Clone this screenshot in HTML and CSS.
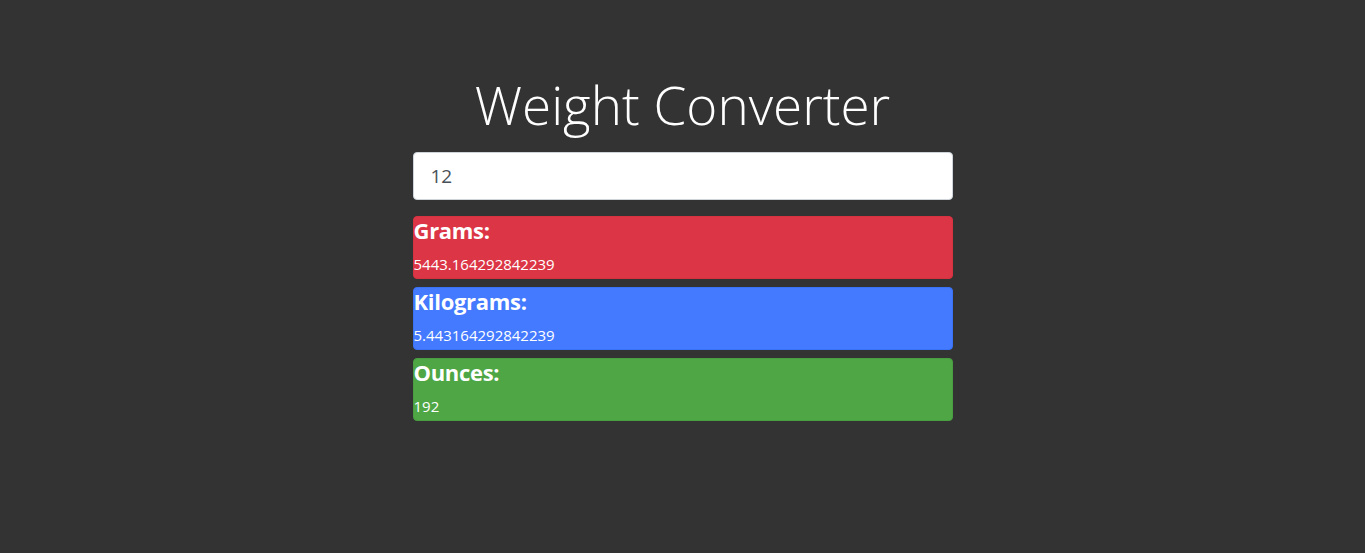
FILE: index.html
```html
<!DOCTYPE html>
<html lang="en">
<head>
<meta charset="utf-8">
<title>Weight Converter</title>
<link rel="stylesheet" href="styles.css">
</head>
<body>
<main class="wrap">
  <h1 class="title">Weight Converter</h1>
  <input class="field" type="text" value="12">
  <div class="card card-red">
    <h4 class="card-title">Grams:</h4>
    <div class="card-value">5443.164292842239</div>
  </div>
  <div class="card card-blue">
    <h4 class="card-title">Kilograms:</h4>
    <div class="card-value">5.443164292842239</div>
  </div>
  <div class="card card-green">
    <h4 class="card-title">Ounces:</h4>
    <div class="card-value">192</div>
  </div>
</main>
</body>
</html>
```
FILE: styles.css
```css
html, body {
  margin: 0;
  padding: 0;
}
body {
  background: #333333;
  color: #ffffff;
  font-family: "Open Sans", "Noto Sans", sans-serif;
  font-size: 16px;
  line-height: 1.5;
}
.wrap {
  width: 540px;
  margin: 0 auto;
  padding-top: 73px;
  display: flex;
  flex-direction: column;
}
.title {
  margin: 0 0 8px 0;
  font-weight: 300;
  font-size: 53px;
  line-height: 1.2;
  text-align: center;
  height: 71px;
}
.field {
  box-sizing: border-box;
  height: 48px;
  width: 100%;
  margin: 0 0 16px 0;
  padding: 8px 17px;
  border: 1px solid #ced4da;
  border-radius: 4px;
  background: #fff;
  color: #495057;
  font-family: inherit;
  font-size: 19px;
  outline: none;
}
.card {
  box-sizing: border-box;
  height: 63px;
  border-radius: 4px;
  border: 1px solid transparent;
  margin-bottom: 8px;
  display: flex;
  flex-direction: column;
}
.card-title {
  margin: 0 0 11px 0;
  font-size: 22px;
  font-weight: 700;
  line-height: 1.2;
  letter-spacing: -0.3px;
}
.card-value {
  font-size: 15px;
  line-height: 20px;
  letter-spacing: 0;
}
.card-red { background: #dc3545; border-color: #d6323f; }
.card-blue { background: #437aff; border-color: #3a72f5; }
.card-green { background: #4ea645; border-color: #489e40; }
```
